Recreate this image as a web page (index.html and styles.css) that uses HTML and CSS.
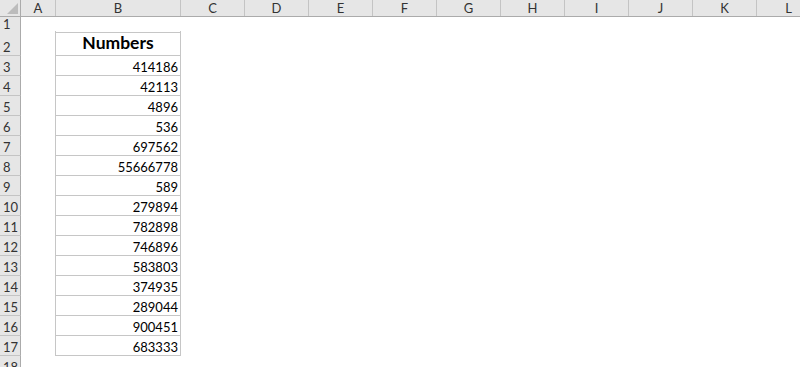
FILE: index.html
```html
<!DOCTYPE html>
<html lang="en">
<head>
    <meta charset="UTF-8">
    <meta name="viewport" content="width=device-width, initial-scale=1.0">
    <title>Book1 - Numbers</title>
    <link rel="stylesheet" href="styles.css">
</head>
<body>
    <div class="sheet">
        <!-- column letters -->
        <div class="col-head">
            <div class="corner">
                <svg width="11" height="11" viewBox="0 0 11 11"><polygon points="11,0 11,11 0,11" fill="#bcbcbc"/></svg>
            </div>
            <div class="col col-a">A</div>
            <div class="col col-b">B</div>
            <div class="col">C</div>
            <div class="col">D</div>
            <div class="col">E</div>
            <div class="col">F</div>
            <div class="col">G</div>
            <div class="col">H</div>
            <div class="col">I</div>
            <div class="col">J</div>
            <div class="col">K</div>
            <div class="col">L</div>
        </div>

        <div class="row row-1">
            <div class="rn">1</div>
            <div class="cell"></div>
            <div class="cell b-top"></div>
        </div>
        <div class="row row-2">
            <div class="rn">2</div>
            <div class="cell"></div>
            <div class="cell boxed title">Numbers</div>
        </div>
        <div class="row"><div class="rn">3</div><div class="cell"></div><div class="cell boxed num">414186</div></div>
        <div class="row"><div class="rn">4</div><div class="cell"></div><div class="cell boxed num">42113</div></div>
        <div class="row"><div class="rn">5</div><div class="cell"></div><div class="cell boxed num">4896</div></div>
        <div class="row"><div class="rn">6</div><div class="cell"></div><div class="cell boxed num">536</div></div>
        <div class="row"><div class="rn">7</div><div class="cell"></div><div class="cell boxed num">697562</div></div>
        <div class="row"><div class="rn">8</div><div class="cell"></div><div class="cell boxed num">55666778</div></div>
        <div class="row"><div class="rn">9</div><div class="cell"></div><div class="cell boxed num">589</div></div>
        <div class="row"><div class="rn">10</div><div class="cell"></div><div class="cell boxed num">279894</div></div>
        <div class="row"><div class="rn">11</div><div class="cell"></div><div class="cell boxed num">782898</div></div>
        <div class="row"><div class="rn">12</div><div class="cell"></div><div class="cell boxed num">746896</div></div>
        <div class="row"><div class="rn">13</div><div class="cell"></div><div class="cell boxed num">583803</div></div>
        <div class="row"><div class="rn">14</div><div class="cell"></div><div class="cell boxed num">374935</div></div>
        <div class="row"><div class="rn">15</div><div class="cell"></div><div class="cell boxed num">289044</div></div>
        <div class="row"><div class="rn">16</div><div class="cell"></div><div class="cell boxed num">900451</div></div>
        <div class="row"><div class="rn">17</div><div class="cell"></div><div class="cell boxed num">683333</div></div>
        <div class="row"><div class="rn">18</div><div class="cell"></div><div class="cell"></div></div>
    </div>
</body>
</html>
```

FILE: styles.css
```css
* {
    box-sizing: border-box;
    margin: 0;
    padding: 0;
}

body {
    background-color: #fff;
    font-family: Lato, 'Liberation Sans', sans-serif;
    font-size: 13px;
    color: #000;
    overflow: hidden;
}

.sheet {
    width: 800px;
    height: 367px;
    overflow: hidden;
}

.col-head {
    display: grid;
    grid-template-columns: 21px 35px 125px repeat(10, 64px);
    height: 17px;
    width: 820px;
    background-color: #e6e6e6;
    border-bottom: 1px solid #ababab;
}

.corner {
    display: flex;
    justify-content: flex-end;
    align-items: flex-end;
    padding: 0 2px 2px 0;
    border-right: 1px solid #ababab;
}

.corner svg {
    display: block;
}

.col {
    display: flex;
    justify-content: center;
    align-items: center;
    border-right: 1px solid #c4c4c4;
    color: #333;
    line-height: 1;
}

.row {
    display: grid;
    grid-template-columns: 21px 35px 125px;
    height: 20px;
}

.row-1 {
    height: 14px;
}

.row-2 {
    height: 25px;
}

.rn {
    display: flex;
    align-items: flex-end;
    padding: 0 0 1px 3px;
    background-color: #e6e6e6;
    border-right: 1px solid #ababab;
    border-bottom: 1px solid #c4c4c4;
    color: #333;
    line-height: 14px;
}

.cell {
    display: flex;
    align-items: flex-end;
    line-height: 14px;
}

.b-top {
    margin-left: -1px;
    border-bottom: 1px solid #c6c6c6;
}

.boxed {
    margin-left: -1px;
    border-left: 1px solid #c6c6c6;
    border-right: 1px solid #c6c6c6;
    border-bottom: 1px solid #c6c6c6;
}

.num {
    justify-content: flex-end;
    padding: 0 2px 1px 0;
}

.title {
    justify-content: center;
    padding-bottom: 3px;
    font-size: 17.5px;
    font-weight: bold;
    line-height: 18px;
}
```
